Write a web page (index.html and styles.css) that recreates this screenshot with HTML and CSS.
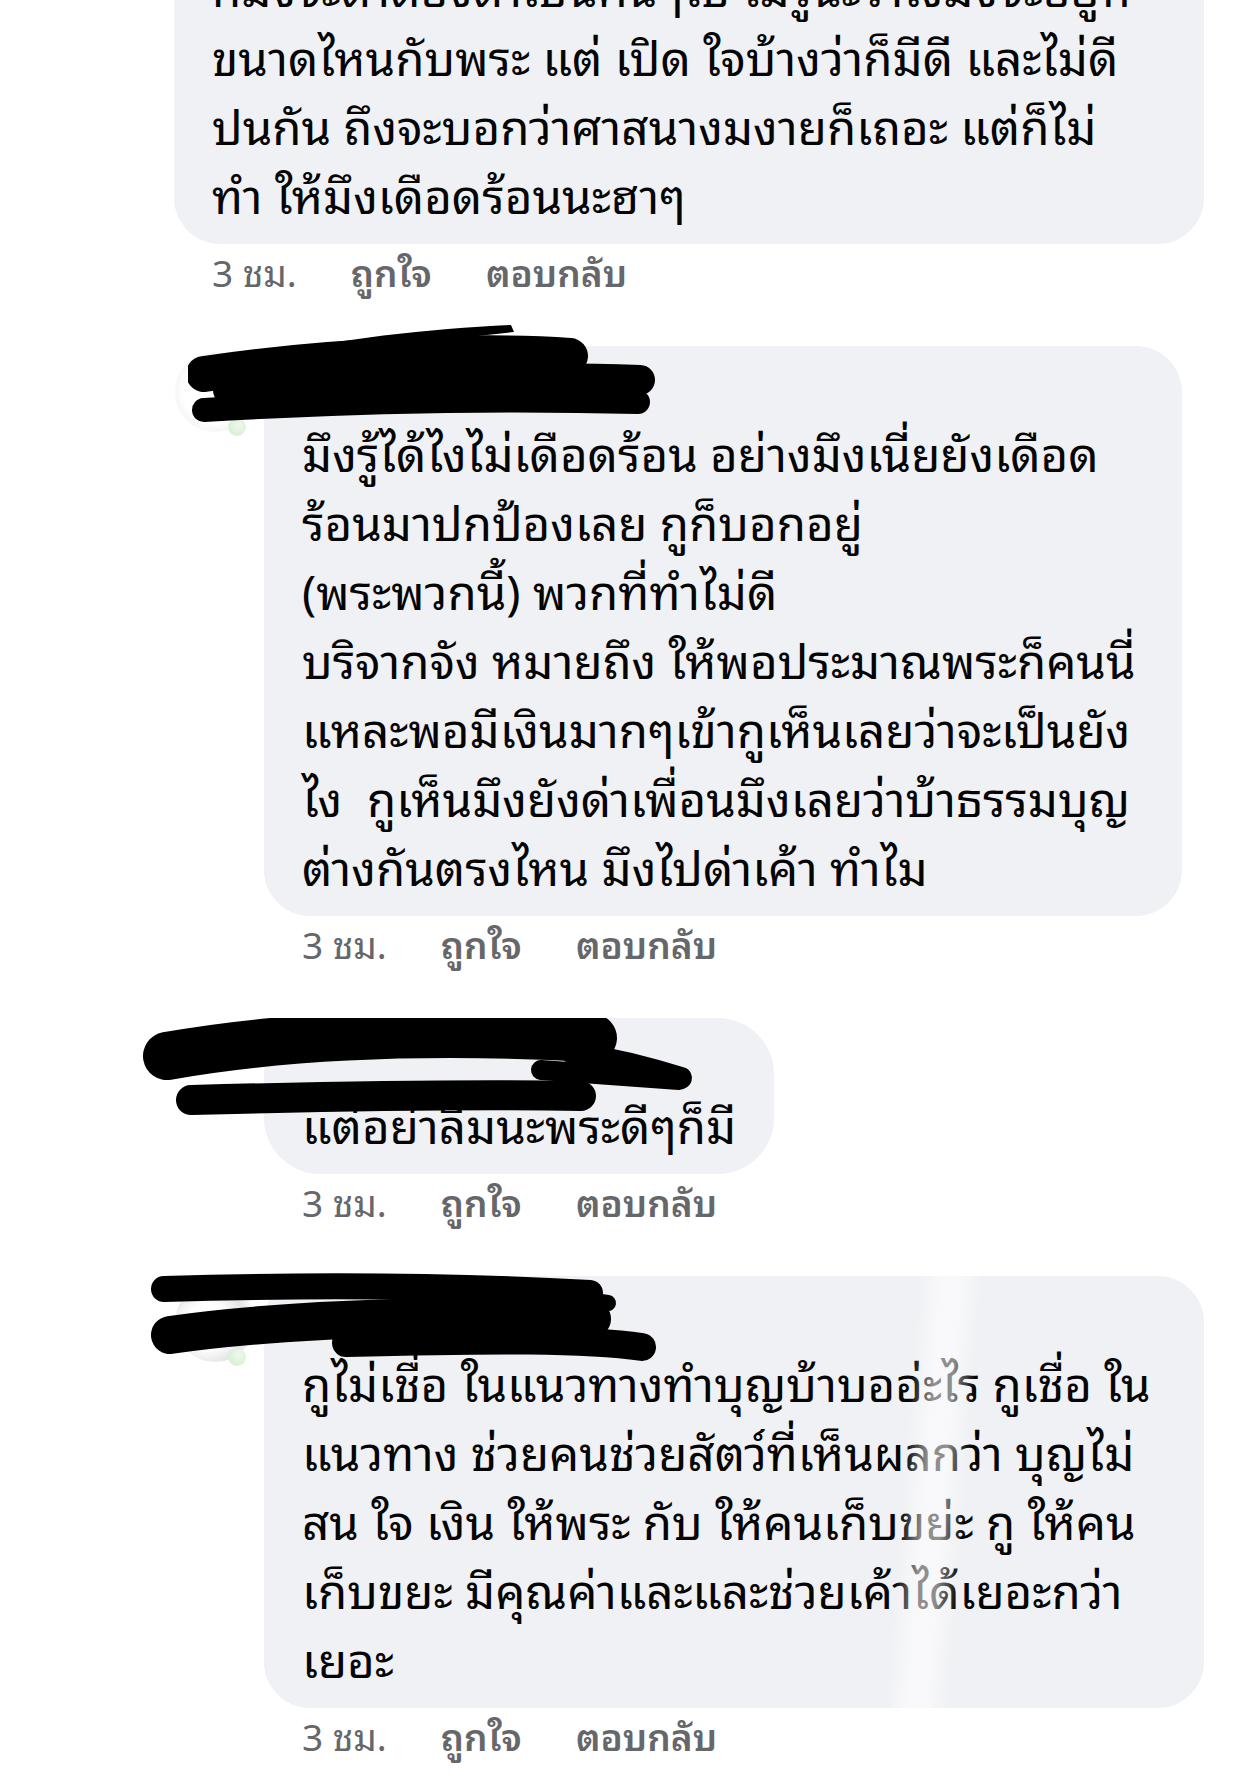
FILE: index.html
```html
<!DOCTYPE html>
<html>
    <head>
        <title> ความคิดเห็น </title>
        <link rel="stylesheet" href="styles.css">
    </head>
    <body>
        <div class="thread">

            <div class="comment top">
                <div class="body">
                    <div class="bubble bubble-1">
                        <div class="text">ก็มึงจะด่าต้องด่าเป็นคนๆไป ไม่รู้นะว่าไงมึงจะอยู่ที่<br>ขนาดไหนกับพระ แต่ เปิด ใจบ้างว่าก็มีดี และไม่ดี<br>ปนกัน ถึงจะบอกว่าศาสนางมงายก็เถอะ แต่ก็ไม่<br>ทำ ให้มึงเดือดร้อนนะฮาๆ</div>
                    </div>
                    <div class="meta"><span class="time">3 ชม.</span><span class="act">ถูกใจ</span><span class="act">ตอบกลับ</span></div>
                </div>
            </div>

            <div class="comment reply">
                <div class="avatar"><span class="online"></span></div>
                <div class="body">
                    <div class="bubble bubble-2">
                        <div class="name">
                            <svg class="scribble s2" width="480" height="104" viewBox="0 0 480 104">
                                <path class="fill" d="M-2 52 C 100 20 220 6 323 1 L 326 8 C 250 16 180 26 110 40 Z" />
                                <path d="M16 50 C 150 30 300 26 382 32" stroke-width="36" />
                                <path d="M40 66 C 200 56 350 52 452 56" stroke-width="30" />
                                <path d="M16 86 C 150 78 300 74 450 78" stroke-width="24" />
                            </svg>
                        </div>
                        <div class="text">มึงรู้ได้ไงไม่เดือดร้อน อย่างมึงเนี่ยยังเดือด<br>ร้อนมาปกป้องเลย กูก็บอกอยู่<br>(พระพวกนี้) พวกที่ทำไม่ดี<br>บริจากจัง หมายถึง ให้พอประมาณพระก็คนนี่<br>แหละพอมีเงินมากๆเข้ากูเห็นเลยว่าจะเป็นยัง<br>ไง&nbsp; กูเห็นมึงยังด่าเพื่อนมึงเลยว่าบ้าธรรมบุญ<br>ต่างกันตรงไหน มึงไปด่าเค้า ทำไม</div>
                    </div>
                    <div class="meta"><span class="time">3 ชม.</span><span class="act">ถูกใจ</span><span class="act">ตอบกลับ</span></div>
                </div>
            </div>

            <div class="comment reply">
                <div class="avatar faint"></div>
                <div class="body">
                    <div class="bubble bubble-3">
                        <div class="name">
                            <svg class="scribble s3" width="570" height="110" viewBox="0 0 570 110">
                                <path d="M26 38 C 150 16 300 12 452 20" stroke-width="48" />
                                <path d="M430 34 C 480 42 515 52 540 60" stroke-width="22" />
                                <path d="M400 52 C 460 56 510 60 538 62" stroke-width="20" />
                                <path d="M50 82 C 200 78 350 76 440 78" stroke-width="30" />
                            </svg>
                        </div>
                        <div class="text">แต่อย่าลืมนะพระดีๆก็มี</div>
                    </div>
                    <div class="meta"><span class="time">3 ชม.</span><span class="act">ถูกใจ</span><span class="act">ตอบกลับ</span></div>
                </div>
            </div>

            <div class="comment reply">
                <div class="avatar marble"><span class="online"></span></div>
                <div class="body">
                    <div class="bubble bubble-4">
                        <div class="name">
                            <svg class="scribble s4" width="520" height="100" viewBox="0 0 520 100">
                                <path d="M18 18 C 150 14 300 14 444 22" stroke-width="26" />
                                <path d="M420 26 L 462 32" stroke-width="16" />
                                <path d="M24 64 C 150 46 350 42 446 48" stroke-width="38" />
                                <path d="M200 72 C 350 68 440 68 496 76" stroke-width="28" />
                            </svg>
                        </div>
                        <div class="text">กูไม่เชื่อ ในแนวทางทำบุญบ้าบออ่ะไร กูเชื่อ ใน<br>แนวทาง ช่วยคนช่วยสัตว์ที่เห็นผลกว่า บุญไม่<br>สน ใจ เงิน ให้พระ กับ ให้คนเก็บขย่ะ กู ให้คน<br>เก็บขยะ มีคุณค่าและและช่วยเค้าได้เยอะกว่า<br>เยอะ</div>
                    </div>
                    <div class="meta"><span class="time">3 ชม.</span><span class="act">ถูกใจ</span><span class="act">ตอบกลับ</span></div>
                </div>
            </div>

        </div>
    </body>
</html>
```

FILE: styles.css
```css
body {
    margin: 0;
    width: 1242px;
    height: 1785px;
    overflow: hidden;
    background-color: #ffffff;
    font-family: "Noto Sans Thai Looped", "Noto Sans Thai", "Noto Sans", "DejaVu Sans", sans-serif;
    color: #050505;
}

.thread {
    display: flex;
    flex-direction: column;
}

.comment {
    display: flex;
    align-items: flex-start;
}
.comment.top {
    padding-left: 174px;
    margin-top: -48px;
}
.comment.reply {
    padding-left: 175px;
    gap: 9px;
}

.body {
    display: flex;
    flex-direction: column;
    align-items: flex-start;
}

.avatar {
    position: relative;
    width: 80px;
    height: 80px;
    margin-top: 6px;
    border-radius: 50%;
    background: radial-gradient(circle, #ffffff 55%, #f1f1f3 80%, #e6e7ea 100%);
    flex-shrink: 0;
}
.avatar.faint {
    background: radial-gradient(circle, #ffffff 70%, #f6f6f7 100%);
}
.avatar.marble {
    background: radial-gradient(circle at 40% 55%, #ffffff 35%, #e3e4e6 60%, #f7f7f8 75%, #dfe0e3 100%);
}
.online {
    position: absolute;
    left: 53px;
    top: 66px;
    width: 18px;
    height: 18px;
    border-radius: 50%;
    background: radial-gradient(circle at 60% 40%, #eef8ec, #d2ebcc);
}

.bubble {
    box-sizing: border-box;
    background-color: #f0f1f4;
    border-radius: 46px;
    padding: 12px 38px 16px 38px;
}
.bubble-1 {
    width: 1030px;
    padding-top: 0;
}
.bubble-2 {
    width: 918px;
}
.bubble-3 {
    width: fit-content;
    border-radius: 56px;
}
.bubble-4 {
    width: 940px;
    position: relative;
}
.bubble-4::after {
    content: '';
    position: absolute;
    top: 0;
    bottom: 0;
    left: 638px;
    width: 64px;
    background: linear-gradient(90deg, rgba(255,255,255,0), rgba(255,255,255,0.55) 35%, rgba(255,255,255,0.55) 65%, rgba(255,255,255,0));
    transform: skewX(-4.5deg);
}

.name {
    position: relative;
    height: 59px;
}
.scribble {
    position: absolute;
    fill: none;
    stroke: #000;
    stroke-linecap: round;
}
.scribble .fill {
    fill: #000;
    stroke: none;
}
.s2 {
    left: -114px;
    top: -34px;
}
.s3 {
    left: -161px;
    top: -12px;
}
.s4 {
    left: -156px;
    top: -17px;
}

.text {
    font-size: 47.5px;
    line-height: 69px;
    white-space: nowrap;
}

.meta {
    display: flex;
    gap: 54px;
    height: 54px;
    line-height: 54px;
    margin-bottom: 48px;
    padding-left: 38px;
    font-size: 37px;
    color: #65676b;
}
.meta .act {
    font-weight: 600;
}
```
